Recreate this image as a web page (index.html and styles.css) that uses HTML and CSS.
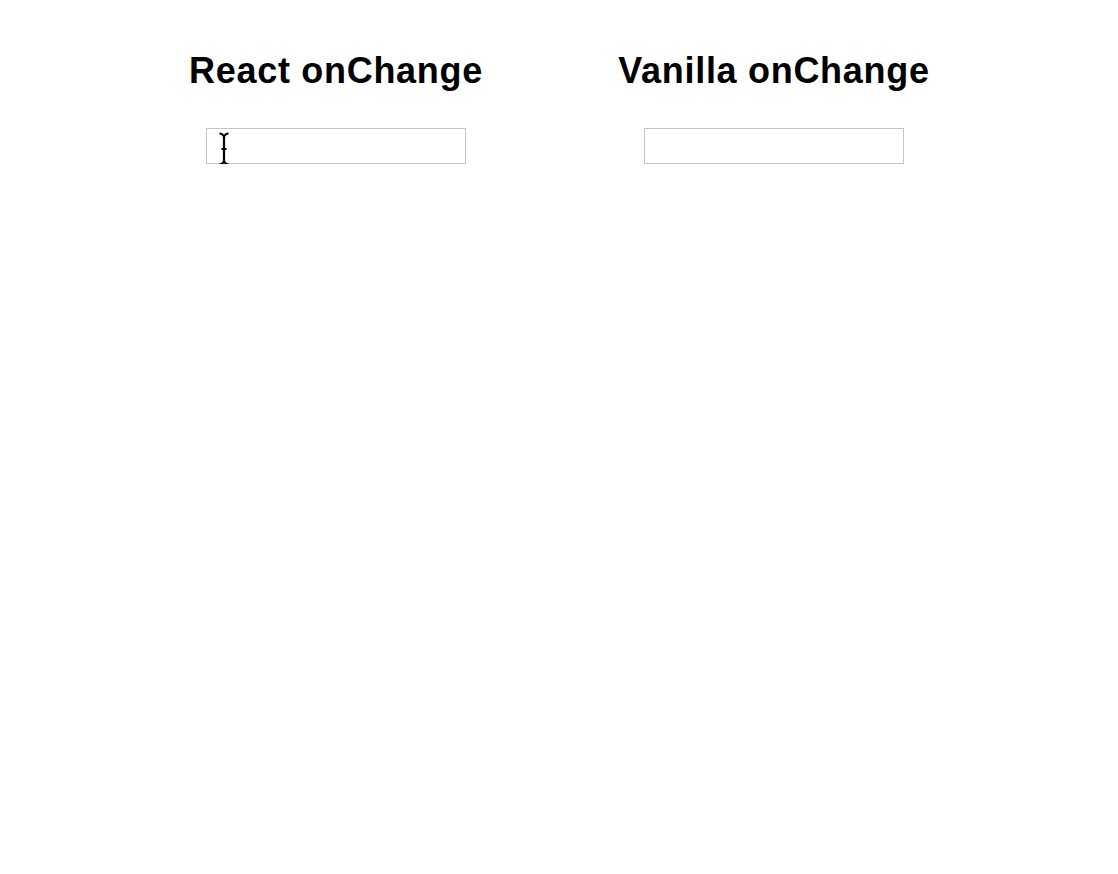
FILE: index.html
```html
<!DOCTYPE html>
<html>
<head>
<meta charset="utf-8">
<link rel="stylesheet" href="styles.css">
</head>
<body>
<div class="demos">
  <section class="demo">
    <h1 class="title">React onChange</h1>
    <div class="field">
      <input class="box" type="text">
      <svg class="cursor" width="12" height="34" viewBox="0 0 12 34">
        <path d="M1.5 1.5 Q4.5 1.5 6 4.5 Q7.5 1.5 10.5 1.5 M6 4.5 V29.5 M1.5 32.5 Q4.5 32.5 6 29.5 Q7.5 32.5 10.5 32.5 M3.5 17 H8.5" fill="none" stroke="#000" stroke-width="2.2"/>
      </svg>
    </div>
  </section>
  <section class="demo">
    <h1 class="title">Vanilla onChange</h1>
    <div class="field">
      <input class="box" type="text">
    </div>
  </section>
</div>
</body>
</html>
```
FILE: styles.css
```css
html, body {
  margin: 0;
  background: #fff;
}
body {
  font-family: "Liberation Sans", Arial, Helvetica, sans-serif;
  color: #000;
}
.demos {
  display: flex;
  padding-left: 117px;
  padding-top: 50px;
}
.demo {
  width: 438px;
  display: flex;
  flex-direction: column;
  align-items: center;
}
.title {
  font-size: 36px;
  font-weight: bold;
  margin: 0;
  line-height: 42px;
  letter-spacing: 0.7px;
}
.field {
  position: relative;
  margin-top: 36px;
}
.box {
  display: block;
  width: 260px;
  height: 36px;
  box-sizing: border-box;
  border: 1px solid #c4c4c4;
  padding: 0 8px;
  margin: 0;
  outline: none;
  font-size: 16px;
}
.cursor {
  position: absolute;
  left: 12px;
  top: 4px;
}
```
